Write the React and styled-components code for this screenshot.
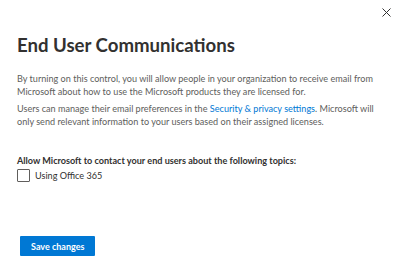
import React from "react";
import styled, { createGlobalStyle } from "styled-components";

const GlobalStyle = createGlobalStyle`
  body {
    margin: 0;
    background: #fff;
    font-family: Lato, "Open Sans", sans-serif;
  }
`;

const Panel = styled.div`
  width: 399px;
  height: 265px;
  box-sizing: border-box;
  padding: 0 17px;
  display: flex;
  flex-direction: column;
`;

const TopBar = styled.div`
  display: flex;
  justify-content: flex-end;
  height: 22px;
  padding-top: 3px;
  margin-right: -13px;
`;

const Close = styled.button`
  width: 18px;
  height: 18px;
  border: 0;
  background: none;
  padding: 0;
  display: flex;
  align-items: center;
  justify-content: center;
  cursor: pointer;
`;

const Title = styled.h1`
  margin: 7px 0 15px;
  font-size: 18.6px;
  line-height: 26px;
  font-weight: 700;
  color: #323130;
`;

const Text = styled.p`
  margin: 0 0 5px;
  font-size: 9.1px;
  line-height: 12.5px;
  color: #605e5c;
`;

const Link = styled.a`
  color: #0078d4;
  text-decoration: none;
`;

const Label = styled.div`
  margin-top: 21px;
  font-size: 9.1px;
  font-weight: 700;
  color: #323130;
  line-height: 13px;
`;

const Option = styled.label`
  display: flex;
  align-items: center;
  gap: 5px;
  margin-top: 2px;
  font-size: 9.1px;
  color: #323130;
`;

const Box = styled.span`
  flex: 0 0 auto;
  box-sizing: border-box;
  width: 13px;
  height: 13px;
  border: 1px solid #605e5c;
  border-radius: 1px;
`;

const Footer = styled.div`
  margin-top: auto;
  padding: 0 0 9px 3px;
`;

const Button = styled.button`
  height: 20px;
  padding: 0 11px;
  border: 0;
  border-radius: 1px;
  background: #0078d4;
  color: #fff;
  font-family: inherit;
  font-size: 9px;
  font-weight: 700;
`;

export default function App() {
  return (
    <>
      <GlobalStyle />
      <Panel>
        <TopBar>
          <Close aria-label="Close">
            <svg width="9" height="9" viewBox="0 0 9 9">
              <path d="M0.5 0.5 L8.5 8.5 M8.5 0.5 L0.5 8.5" stroke="#323130" strokeWidth="1" />
            </svg>
          </Close>
        </TopBar>
        <Title>End User Communications</Title>
        <Text>
          By turning on this control, you will allow people in your organization to receive email from
          <br />
          Microsoft about how to use the Microsoft products they are licensed for.
        </Text>
        <Text>
          Users can manage their email preferences in the <Link href="#">Security &amp; privacy settings</Link>. Microsoft will
          <br />
          only send relevant information to your users based on their assigned licenses.
        </Text>
        <Label>Allow Microsoft to contact your end users about the following topics:</Label>
        <Option>
          <Box />
          Using Office 365
        </Option>
        <Footer>
          <Button>Save changes</Button>
        </Footer>
      </Panel>
    </>
  );
}
